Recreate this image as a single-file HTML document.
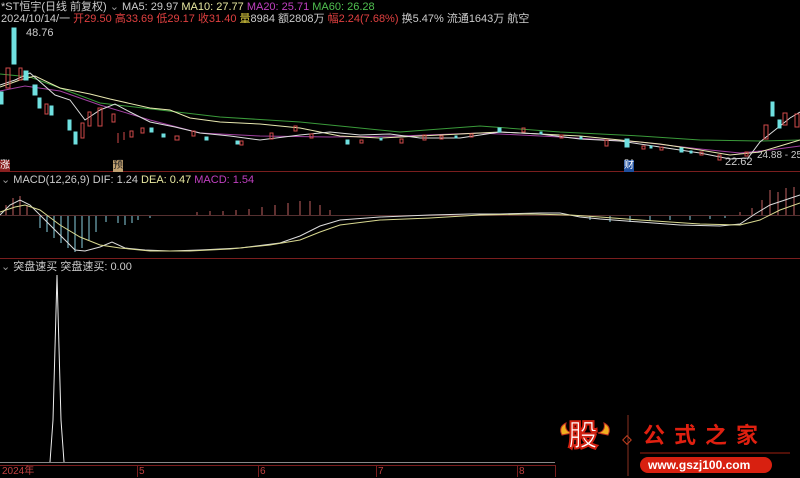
<!DOCTYPE html>
<html><head><meta charset="utf-8"><style>
body{margin:0;background:#000;width:800px;height:477px;overflow:hidden;font-family:"Liberation Sans","Noto Sans CJK SC",sans-serif}
svg{position:absolute;left:0;top:0}
.t{position:absolute;font-size:11px;white-space:nowrap;line-height:12px}
</style></head><body>
<svg width="800" height="477">
<g stroke="#7a1e1e" stroke-width="1">
<line x1="0" y1="171.5" x2="800" y2="171.5"/>
<line x1="0" y1="258.5" x2="800" y2="258.5"/>
<line x1="0" y1="465.5" x2="555" y2="465.5"/>
<line x1="137.5" y1="465" x2="137.5" y2="477"/>
<line x1="258.5" y1="465" x2="258.5" y2="477"/>
<line x1="376.5" y1="465" x2="376.5" y2="477"/>
<line x1="517.5" y1="465" x2="517.5" y2="477"/>
<line x1="555.5" y1="465" x2="555.5" y2="477"/>
</g>
<polyline fill="none" stroke="#3a9a3a" points="0,74 30,77 60,88 100,103 160,110 220,117 300,122 400,132 480,126 560,132 640,136 700,140 760,141 800,140"/>
<polyline fill="none" stroke="#a040a0" points="0,91 25,86 60,91 100,105 150,120 200,133 260,136 330,137 400,136 480,133 560,137 640,142 700,149 740,153 770,150 800,146"/>
<polyline fill="none" stroke="#e8e8b0" points="0,87 20,80 35,76 60,88 90,94 110,99 150,108 170,110 190,118 220,122 260,124 300,128 340,136 380,138 420,136 460,134 500,132 540,134 580,136 620,140 660,144 700,150 730,155 760,152 780,146 800,140"/>
<polyline fill="none" stroke="#ddd" points="0,85 15,80 30,73 55,95 70,100 85,120 100,110 115,104 130,112 150,122 175,127 200,133 230,136 260,140 300,135 330,132 360,135 390,134 420,138 460,138 500,132 540,134 580,139 620,141 660,147 700,153 730,159 748,158 760,142 775,130 790,118 800,112"/>
<g stroke="#d04a4a" fill="none">
<rect x="6" y="68" width="4" height="20"/><rect x="19" y="68" width="3" height="12"/><rect x="45" y="104" width="3" height="10"/><rect x="81" y="123" width="3" height="15"/><rect x="88" y="112" width="3" height="14"/><rect x="98" y="108" width="4" height="18"/><rect x="112" y="114" width="3" height="8"/><line x1="118" y1="133" x2="118" y2="143"/><line x1="124" y1="132" x2="124" y2="140"/><rect x="130" y="131" width="3" height="6"/><rect x="141" y="128" width="3" height="5"/><rect x="175" y="136" width="4" height="4"/><rect x="192" y="131" width="3" height="5"/><rect x="240" y="141" width="3" height="4"/><rect x="270" y="133" width="3" height="6"/><rect x="294" y="126" width="3" height="5"/><rect x="400" y="139" width="3" height="4"/><rect x="423" y="135" width="3" height="5"/><rect x="522" y="128" width="3" height="4"/><rect x="605" y="140" width="3" height="6"/><rect x="642" y="146" width="3" height="3"/><rect x="718" y="155" width="3" height="5"/><rect x="764" y="125" width="4" height="14"/><rect x="783" y="113" width="4" height="12"/><rect x="795" y="114" width="4" height="13"/>
<rect x="310" y="134" width="3" height="4"/><rect x="360" y="140" width="3" height="3"/><rect x="440" y="136" width="3" height="3"/><rect x="470" y="134" width="3" height="3"/><rect x="560" y="135" width="3" height="3"/><rect x="660" y="147" width="3" height="3"/><rect x="700" y="152" width="3" height="3"/><rect x="745" y="152" width="3" height="4"/>
</g>
<g fill="#6fe0e0" stroke="#6fe0e0">
<rect x="12" y="28" width="4" height="36"/><rect x="0" y="92" width="3" height="12"/><rect x="24" y="71" width="4" height="9"/><rect x="33" y="85" width="4" height="10"/><rect x="38" y="98" width="3" height="10"/><rect x="50" y="106" width="3" height="9"/><rect x="68" y="120" width="3" height="10"/><rect x="74" y="132" width="3" height="12"/><rect x="150" y="128" width="3" height="4"/><rect x="162" y="134" width="3" height="3"/><rect x="205" y="137" width="3" height="3"/><rect x="236" y="141" width="3" height="3"/><rect x="346" y="140" width="3" height="4"/><rect x="498" y="128" width="3" height="4"/><rect x="625" y="139" width="4" height="8"/><rect x="680" y="148" width="3" height="4"/><rect x="771" y="102" width="3" height="14"/><rect x="778" y="120" width="3" height="8"/>
<rect x="380" y="138" width="2" height="2"/><rect x="455" y="136" width="2" height="2"/><rect x="540" y="132" width="2" height="2"/><rect x="580" y="137" width="2" height="2"/><rect x="650" y="146" width="2" height="2"/><rect x="690" y="151" width="2" height="2"/>
</g>
<g stroke="#c06060">
<line x1="6" y1="215" x2="6" y2="205"/><line x1="13" y1="215" x2="13" y2="198"/><line x1="20" y1="215" x2="20" y2="196"/><line x1="27" y1="215" x2="27" y2="205"/>
<line x1="197" y1="215" x2="197" y2="212"/><line x1="210" y1="215" x2="210" y2="211"/><line x1="223" y1="215" x2="223" y2="211"/><line x1="236" y1="215" x2="236" y2="210"/><line x1="249" y1="215" x2="249" y2="209"/><line x1="262" y1="215" x2="262" y2="207"/><line x1="275" y1="215" x2="275" y2="205"/><line x1="288" y1="215" x2="288" y2="203"/><line x1="300" y1="215" x2="300" y2="201"/><line x1="310" y1="215" x2="310" y2="201"/><line x1="320" y1="215" x2="320" y2="205"/><line x1="330" y1="215" x2="330" y2="210"/>
<line x1="740" y1="215" x2="740" y2="212"/><line x1="752" y1="215" x2="752" y2="208"/><line x1="762" y1="215" x2="762" y2="200"/><line x1="770" y1="215" x2="770" y2="190"/><line x1="778" y1="215" x2="778" y2="192"/><line x1="786" y1="215" x2="786" y2="188"/><line x1="794" y1="215" x2="794" y2="187"/>
</g>
<g stroke="#8ad0e0">
<line x1="40" y1="215" x2="40" y2="228"/><line x1="47" y1="215" x2="47" y2="232"/><line x1="54" y1="215" x2="54" y2="238"/><line x1="61" y1="215" x2="61" y2="243"/><line x1="68" y1="215" x2="68" y2="248"/><line x1="75" y1="215" x2="75" y2="252"/><line x1="82" y1="215" x2="82" y2="248"/><line x1="89" y1="215" x2="89" y2="240"/><line x1="96" y1="215" x2="96" y2="232"/><line x1="106" y1="215" x2="106" y2="222"/><line x1="118" y1="215" x2="118" y2="223"/><line x1="125" y1="215" x2="125" y2="225"/><line x1="132" y1="215" x2="132" y2="223"/><line x1="138" y1="215" x2="138" y2="220"/><line x1="150" y1="215" x2="150" y2="218"/>
<line x1="590" y1="215" x2="590" y2="220"/><line x1="610" y1="215" x2="610" y2="222"/><line x1="630" y1="215" x2="630" y2="222"/><line x1="650" y1="215" x2="650" y2="221"/><line x1="670" y1="215" x2="670" y2="220"/><line x1="690" y1="215" x2="690" y2="220"/><line x1="710" y1="215" x2="710" y2="219"/><line x1="725" y1="215" x2="725" y2="218"/>
</g>
<line x1="0" y1="215.5" x2="800" y2="215.5" stroke="#553030"/>
<polyline fill="none" stroke="#ddd" points="0,215 10,205 20,200 30,205 45,220 60,235 75,250 85,251 100,247 112,242 125,248 145,250 170,251 200,250 240,248 280,243 300,236 320,226 340,220 380,217 430,215 470,214 500,214 540,213 560,213 580,217 600,219 640,222 680,225 720,226 740,224 755,214 770,205 785,200 800,195"/>
<polyline fill="none" stroke="#d8d890" points="0,212 15,207 25,205 40,210 60,225 80,237 100,245 120,248 150,251 190,251 230,249 270,245 300,240 320,232 340,225 380,220 430,218 480,215 530,214 570,215 600,217 640,220 700,224 740,225 760,220 780,210 800,203"/>
<polyline fill="none" stroke="#eee" points="50,462 53,420 57,275 61,420 64,462"/>
<line x1="0" y1="462.5" x2="555" y2="462.5" stroke="#888"/>
<path d="M562,435 q-4,-8 4,-12 q-2,8 6,10 z M608,435 q4,-8 -4,-12 q2,8 -6,10 z" fill="#f0b020" stroke="#c03020"/>
<line x1="628" y1="415" x2="628" y2="476" stroke="#8a3020"/>
<rect x="624" y="437" width="6" height="6" transform="rotate(45 627 440)" fill="none" stroke="#c04020"/>
<line x1="640" y1="453" x2="790" y2="453" stroke="#a02010"/>
<rect x="640" y="457" width="132" height="16" rx="8" fill="#d82010"/>
</svg>
<div class="t" style="left:1px;top:1px;color:#ccc">*ST恒宇(日线 前复权) <span style="color:#999">⌄</span> MA5: 29.97 <span style="color:#e8e8a0">MA10: 27.77</span> <span style="color:#c040c0">MA20: 25.71</span> <span style="color:#50c050">MA60: 26.28</span></div>
<div class="t" style="left:1px;top:13px;color:#ccc">2024/10/14/一 <span style="color:#e04040">开29.50 高33.69 低29.17 收31.40</span> <span style="color:#e0d040">量</span>8984 额2808万 <span style="color:#e04040">幅2.24(7.68%)</span> 换5.47% 流通1643万 航空</div>
<div class="t" style="left:26px;top:27px;color:#ccc">48.76</div>
<div class="t" style="left:725px;top:156px;color:#ccc">22.62</div>
<div class="t" style="left:757px;top:150px;color:#ccc;font-size:10px">24.88 - 25</div>
<div class="t" style="left:0;top:160px;color:#fff;background:#8a2020;font-size:10px">涨</div>
<div class="t" style="left:113px;top:160px;color:#222;background:#c0a070;font-size:10px">预</div>
<div class="t" style="left:624px;top:160px;color:#fff;background:#2050a0;font-size:10px">财</div>
<div class="t" style="left:1px;top:174px;color:#ccc"><span style="color:#999">⌄</span> MACD(12,26,9) DIF: 1.24 <span style="color:#e8e8a0">DEA: 0.47</span> <span style="color:#c040c0">MACD: 1.54</span></div>
<div class="t" style="left:1px;top:261px;color:#ccc"><span style="color:#999">⌄</span> 突盘速买 突盘速买: 0.00</div>
<div class="t" style="left:2px;top:466px;color:#c04040;font-size:10px">2024年</div>
<div class="t" style="left:139px;top:466px;color:#c04040;font-size:10px">5</div>
<div class="t" style="left:260px;top:466px;color:#c04040;font-size:10px">6</div>
<div class="t" style="left:378px;top:466px;color:#c04040;font-size:10px">7</div>
<div class="t" style="left:519px;top:466px;color:#c04040;font-size:10px">8</div>
<div class="t" style="left:568px;top:420px;color:#fff;font-size:30px;line-height:34px;font-weight:bold;-webkit-text-stroke:2px #d02010">股</div>
<div class="t" style="left:643px;top:423px;color:#e02010;font-size:22px;line-height:26px;font-weight:bold;letter-spacing:9px">公式之家</div>
<div class="t" style="left:648px;top:459px;color:#fff;font-size:12px;font-weight:bold">www.gszj100.com</div>
</body></html>
